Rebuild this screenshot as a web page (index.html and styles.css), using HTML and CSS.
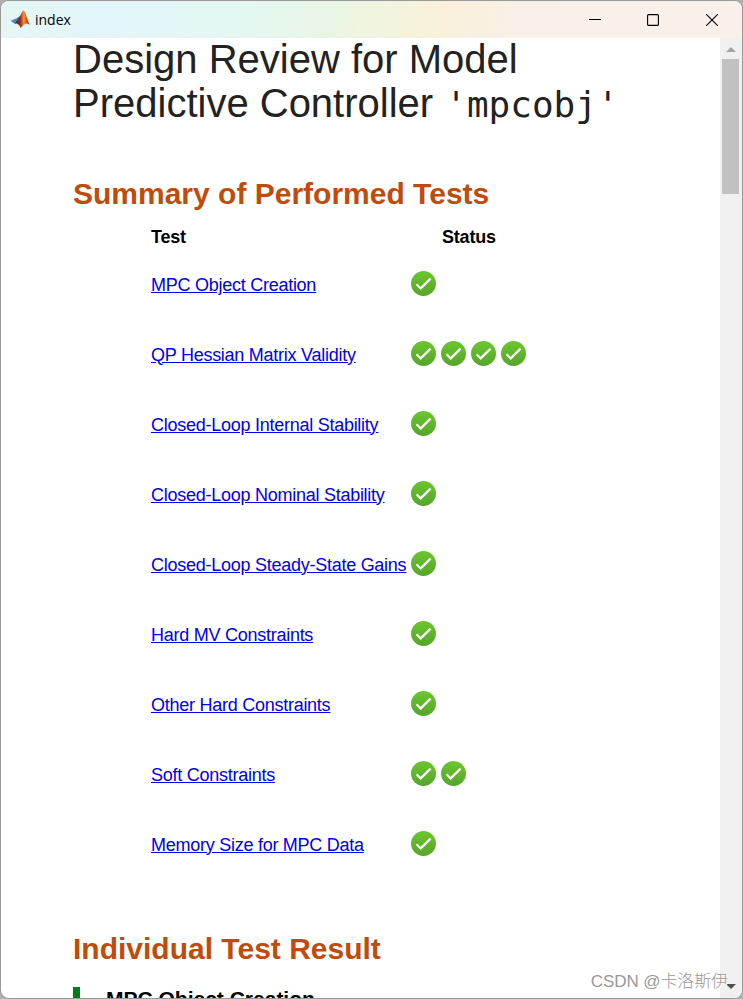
FILE: index.html
```html
<!DOCTYPE html>
<html lang="en">
<head>
    <meta charset="UTF-8">
    <title>index</title>
    <link rel="stylesheet" href="styles.css">
</head>
<body>
    <!-- Shared status icon -->
    <svg class="defs" width="0" height="0">
        <defs>
            <linearGradient id="green" x1="0" y1="0" x2="0" y2="1">
                <stop offset="0" stop-color="#6bc62e"/>
                <stop offset="1" stop-color="#56a52b"/>
            </linearGradient>
            <linearGradient id="flame" x1="0" y1="0" x2="1" y2="0">
                <stop offset="0" stop-color="#3c2a3c"/>
                <stop offset="0.35" stop-color="#8f2a1c"/>
                <stop offset="0.6" stop-color="#f59a3a"/>
                <stop offset="0.75" stop-color="#e0591e"/>
                <stop offset="1" stop-color="#a82c18"/>
            </linearGradient>
            <symbol id="pass" viewBox="0 0 25 25">
                <circle cx="12.5" cy="12.5" r="12.5" fill="url(#green)"/>
                <path d="M5.6 13.2l4.1 4.2L19.6 7.6" fill="none" stroke="#fff" stroke-width="2.2"/>
            </symbol>
        </defs>
    </svg>

    <div class="window">
        <header class="titlebar">
            <svg class="logo" width="20" height="19" viewBox="0 0 20 19">
                <path d="M.5 10.800l6.500-2.800 2.800-2 .5 3-5 5.200z" fill="#4a8fc8"/>
                <path d="M5 13l4.800-6.500C11 4.500 12.500.5 13.600.5c1.700 0 3.800 9.500 6.200 14.500-2.300-1.800-3.700-2-5-.8L10.500 18C9.500 14.500 7.500 13.500 5 13z" fill="url(#flame)"/>
            </svg>
            <span class="title">index</span>
            <div class="controls">
                <svg width="12" height="12" viewBox="0 0 12 12"><path d="M0 5.500h12"/></svg>
                <svg width="12" height="12" viewBox="0 0 12 12"><rect x=".6" y=".6" width="10.800" height="10.800" rx="1"/></svg>
                <svg width="12" height="12" viewBox="0 0 12 12"><path d="M.3.3l11.400 11.400M11.700.3L.3 11.700"/></svg>
            </div>
        </header>

        <div class="view">
            <main class="page">
                <h1>Design Review for Model<br>Predictive Controller <code>'mpcobj'</code></h1>

                <h2>Summary of Performed Tests</h2>
                <div class="tests">
                    <div class="row head"><span>Test</span><span class="status-head">Status</span></div>
                    <div class="row"><a href="#">MPC Object Creation</a><span class="status"><svg><use href="#pass"/></svg></span></div>
                    <div class="row"><a href="#">QP Hessian Matrix Validity</a><span class="status"><svg><use href="#pass"/></svg><svg><use href="#pass"/></svg><svg><use href="#pass"/></svg><svg><use href="#pass"/></svg></span></div>
                    <div class="row"><a href="#">Closed-Loop Internal Stability</a><span class="status"><svg><use href="#pass"/></svg></span></div>
                    <div class="row"><a href="#">Closed-Loop Nominal Stability</a><span class="status"><svg><use href="#pass"/></svg></span></div>
                    <div class="row"><a href="#">Closed-Loop Steady-State Gains</a><span class="status"><svg><use href="#pass"/></svg></span></div>
                    <div class="row"><a href="#">Hard MV Constraints</a><span class="status"><svg><use href="#pass"/></svg></span></div>
                    <div class="row"><a href="#">Other Hard Constraints</a><span class="status"><svg><use href="#pass"/></svg></span></div>
                    <div class="row"><a href="#">Soft Constraints</a><span class="status"><svg><use href="#pass"/></svg><svg><use href="#pass"/></svg></span></div>
                    <div class="row"><a href="#">Memory Size for MPC Data</a><span class="status"><svg><use href="#pass"/></svg></span></div>
                </div>

                <h2 class="results">Individual Test Result</h2>
                <h3>MPC Object Creation</h3>
            </main>

            <div class="scrollbar">
                <svg width="10" height="5" viewBox="0 0 10 5"><path d="M0 5l5-5 5 5z" fill="#a3a3a3"/></svg>
                <div class="thumb"></div>
                <svg class="down" width="10" height="5" viewBox="0 0 10 5"><path d="M0 0h10L5 5z" fill="#505050"/></svg>
            </div>
        </div>
    </div>
    <div class="watermark">CSDN @卡洛斯伊</div>
</body>
</html>
```
FILE: styles.css
```css
* {
    box-sizing: border-box;
}

body {
    margin: 0;
    height: 999px;
    overflow: hidden;
    background: linear-gradient(#b1afb0 67px, #2c5378 67px, #2c5378 102px, #b1b1b1 102px);
    font-family: "Liberation Sans", Arial, sans-serif;
    color: #000;
}

.defs {
    position: absolute;
}

/* Window frame */
.window {
    display: flex;
    flex-direction: column;
    width: 741px;
    height: 997px;
    margin: 1px;
    border-radius: 8px;
    overflow: hidden;
    background: #fff;
    box-shadow: 0 0 0 1px #999;
}

.titlebar {
    display: flex;
    flex: none;
    align-items: center;
    height: 37px;
    padding: 0 24px 0 9px;
    background: linear-gradient(100deg, #e5f6f4 0%, #e3f5fa 14%, #e4f7f1 34%, #eaf6e4 45%, #f5f3dc 55%, #faf0dc 60%, #f9f0e8 70%, #f9f0eb 100%);
}

.title {
    margin-left: 5px;
    font-family: "Open Sans", "Noto Sans", sans-serif;
    font-size: 14px;
}

.controls {
    display: flex;
    gap: 47px;
    margin-left: auto;
}

.controls svg {
    fill: none;
    stroke: #000;
    stroke-width: 1.1;
}

.controls svg:first-child {
    margin-right: -1px;
}

/* Report */
.view {
    display: flex;
    flex: 1;
    min-height: 0;
}

.page {
    flex: 1;
    padding-left: 72px;
    overflow: hidden;
}

h1 {
    margin: -1px 0 0;
    font-size: 40px;
    font-weight: normal;
    line-height: 44px;
    color: #222;
    white-space: nowrap;
}

h1 code {
    margin-left: 1px;
    font-family: "DejaVu Sans Mono", monospace;
    font-size: 36px;
    line-height: 1;
}

h2 {
    margin: 51px 0 0;
    font-size: 30px;
    line-height: 36px;
    color: #c04c0b;
}

.tests {
    padding: 13px 0 0 78px;
    font-size: 18px;
}

.row {
    display: grid;
    grid-template-columns: 260px 1fr;
    align-items: center;
    height: 70px;
}

.row.head {
    height: 24px;
    font-weight: bold;
    letter-spacing: -0.2px;
}

.row.head + .row {
    height: 69px;
}

.row a {
    padding-top: 4px;
    color: #0000ee;
    letter-spacing: -0.26px;
    white-space: nowrap;
    justify-self: start;
}

.status-head {
    padding-left: 31px;
}

.status {
    display: flex;
    gap: 5px;
}

.status svg {
    width: 25px;
    height: 25px;
}

h2.results {
    margin-top: 53px;
}

h3 {
    margin: 20px 0 0;
    padding-left: 26px;
    border-left: 7px solid #008013;
    font-size: 21px;
    line-height: 23px;
}

/* Scrollbar */
.scrollbar {
    display: flex;
    flex-direction: column;
    align-items: center;
    width: 22px;
    padding: 9px 1px 9px 0;
    background: #f0f0f0;
}

.thumb {
    width: 17px;
    height: 135px;
    margin-top: 7px;
    background: #c1c1c1;
}

.down {
    margin-top: auto;
}

.watermark {
    position: absolute;
    right: 15px;
    bottom: 7px;
    font-family: "Liberation Sans", "Noto Sans CJK SC", sans-serif;
    font-size: 17px;
    font-weight: 300;
    letter-spacing: -0.1px;
    color: #999;
    text-shadow: 1px 1px 0 #fff;
    white-space: nowrap;
}
```
